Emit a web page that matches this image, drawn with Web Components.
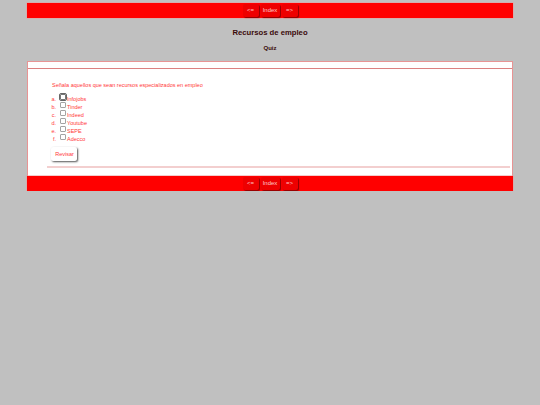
<!DOCTYPE html>
<html>
<head>
<meta charset="utf-8">
<title>Recursos de empleo</title>
<style>
  html, body { margin: 0; padding: 0; background: #c0c0c0; }
  body { font-family: "Liberation Sans", Arial, sans-serif; }
</style>
</head>
<body>
<quiz-page>
  <nav-bar></nav-bar>
  <page-title heading="Recursos de empleo" sub="Quiz"></page-title>
  <quiz-box>
    <quiz-question prompt="Señala aquellos que sean recursos especializados en empleo">
      <quiz-option mark="a." focused>Infojobs</quiz-option>
      <quiz-option mark="b.">Tinder</quiz-option>
      <quiz-option mark="c.">Indeed</quiz-option>
      <quiz-option mark="d.">Youtube</quiz-option>
      <quiz-option mark="e.">SEPE</quiz-option>
      <quiz-option mark="f.">Adecco</quiz-option>
    </quiz-question>
  </quiz-box>
  <nav-bar></nav-bar>
</quiz-page>
<script>
class QuizPage extends HTMLElement {
  connectedCallback() {
    this.attachShadow({ mode: "open" });
    this.shadowRoot.innerHTML = `
      <style>
        :host {
          display: block;
          width: 486px;
          margin: 0 auto;
          padding-top: 3px;
        }
      </style>
      <slot></slot>
    `;
  }
}
class NavBar extends HTMLElement {
  connectedCallback() {
    this.attachShadow({ mode: "open" });
    this.shadowRoot.innerHTML = `
      <style>
        :host {
          display: flex;
          justify-content: center;
          gap: 2px;
          height: 15px;
          box-sizing: border-box;
          background: #ff0000;
          box-shadow: 0 0 0 0.5px #eb9a9a;
          padding-top: 1px;
        }
        a {
          display: block;
          box-sizing: border-box;
          width: 16px;
          height: 13px;
          line-height: 13px;
          text-align: center;
          font-size: 6px;
          color: #ffc8c8;
          background: #ee0000;
          border-radius: 2px;
          box-shadow: 1px 1px 1px #8e0000;
          text-decoration: none;
        }
        a.mid { width: 19px; }
      </style>
      <a href="#">&lt;=</a>
      <a class="mid" href="#">Index</a>
      <a href="#">=&gt;</a>
    `;
  }
}
class PageTitle extends HTMLElement {
  connectedCallback() {
    this.attachShadow({ mode: "open" });
    this.shadowRoot.innerHTML = `
      <style>
        :host {
          display: block;
          height: 43px;
          text-align: center;
          color: #3a0a0a;
          font-weight: bold;
        }
        h1 {
          margin: 0;
          padding-top: 10px;
          font-size: 7.7px;
          line-height: 10px;
        }
        h2 {
          margin: 0;
          padding-top: 6px;
          font-size: 6px;
          line-height: 8px;
        }
      </style>
      <h1>${this.getAttribute("heading")}</h1>
      <h2>${this.getAttribute("sub")}</h2>
    `;
  }
}
class QuizBox extends HTMLElement {
  connectedCallback() {
    this.attachShadow({ mode: "open" });
    this.shadowRoot.innerHTML = `
      <style>
        :host {
          display: block;
          box-sizing: border-box;
          height: 115px;
          background: #fff;
          border: 1px solid #e89494;
          border-bottom: 0;
        }
        .head {
          height: 5.5px;
          border-bottom: 1.5px solid #dc8080;
        }
        .body { padding: 12.5px 2px 0 19px; }
      </style>
      <div class="head"></div>
      <div class="body"><slot></slot></div>
    `;
  }
}
class QuizQuestion extends HTMLElement {
  connectedCallback() {
    this.attachShadow({ mode: "open" });
    this.shadowRoot.innerHTML = `
      <style>
        :host {
          display: block;
          color: #ff3838;
          font-size: 5.5px;
        }
        p {
          margin: 0 0 0 5px;
          line-height: 8px;
        }
        .list {
          margin-top: 5.5px;
          display: flex;
          flex-direction: column;
        }
        button {
          display: block;
          margin: 4px 0 0 4px;
          width: 26px;
          height: 14px;
          padding: 0 0 0 1px;
          border: 0;
          border-radius: 2px;
          background: #fff;
          color: #ff3838;
          font: 5.5px "Liberation Sans", Arial, sans-serif;
          box-shadow: 1px 1px 2px #555;
        }
        hr {
          margin: 5px 0 0;
          height: 2px;
          border: 0;
          background: #f3cfcf;
        }
      </style>
      <p>${this.getAttribute("prompt")}</p>
      <div class="list"><slot></slot></div>
      <button>Revisar</button>
      <hr>
    `;
  }
}
class QuizOption extends HTMLElement {
  connectedCallback() {
    const focused = this.hasAttribute("focused");
    this.attachShadow({ mode: "open" });
    this.shadowRoot.innerHTML = `
      <style>
        :host {
          display: flex;
          align-items: center;
          height: 8px;
        }
        .mark {
          width: 9px;
          text-align: right;
          margin-right: 4px;
        }
        .box {
          box-sizing: border-box;
          width: 6px;
          height: 6px;
          margin: -3px 1px 0 0;
          border: 0.5px solid #a4a4a4;
          border-radius: 1px;
          background: #fff;
        }
        .box.focus {
          border-color: #777;
          outline: 1px solid #666;
          outline-offset: 0;
        }
      </style>
      <span class="mark">${this.getAttribute("mark")}</span>
      <span class="box${focused ? " focus" : ""}"></span>
      <slot></slot>
    `;
  }
}
customElements.define("quiz-page", QuizPage);
customElements.define("nav-bar", NavBar);
customElements.define("page-title", PageTitle);
customElements.define("quiz-box", QuizBox);
customElements.define("quiz-question", QuizQuestion);
customElements.define("quiz-option", QuizOption);
</script>
</body>
</html>
